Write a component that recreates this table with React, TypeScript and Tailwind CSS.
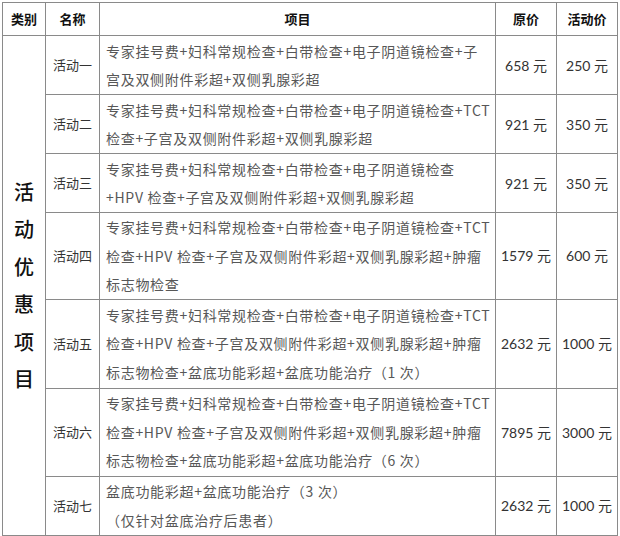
const rows = [
  {
    name: "活动一",
    h: "h-[59px]",
    lines: ["专家挂号费+妇科常规检查+白带检查+电子阴道镜检查+子", "宫及双侧附件彩超+双侧乳腺彩超"],
    price: "658",
    sale: "250",
  },
  {
    name: "活动二",
    h: "h-[59px]",
    lines: ["专家挂号费+妇科常规检查+白带检查+电子阴道镜检查+TCT", "检查+子宫及双侧附件彩超+双侧乳腺彩超"],
    price: "921",
    sale: "350",
  },
  {
    name: "活动三",
    h: "h-[59px]",
    lines: ["专家挂号费+妇科常规检查+白带检查+电子阴道镜检查", "+HPV 检查+子宫及双侧附件彩超+双侧乳腺彩超"],
    price: "921",
    sale: "350",
  },
  {
    name: "活动四",
    h: "h-[86px]",
    lines: [
      "专家挂号费+妇科常规检查+白带检查+电子阴道镜检查+TCT",
      "检查+HPV 检查+子宫及双侧附件彩超+双侧乳腺彩超+肿瘤",
      "标志物检查",
    ],
    price: "1579",
    sale: "600",
  },
  {
    name: "活动五",
    h: "h-[89px]",
    lines: [
      "专家挂号费+妇科常规检查+白带检查+电子阴道镜检查+TCT",
      "检查+HPV 检查+子宫及双侧附件彩超+双侧乳腺彩超+肿瘤",
      "标志物检查+盆底功能彩超+盆底功能治疗（1 次）",
    ],
    price: "2632",
    sale: "1000",
  },
  {
    name: "活动六",
    h: "h-[88px]",
    lines: [
      "专家挂号费+妇科常规检查+白带检查+电子阴道镜检查+TCT",
      "检查+HPV 检查+子宫及双侧附件彩超+双侧乳腺彩超+肿瘤",
      "标志物检查+盆底功能彩超+盆底功能治疗（6 次）",
    ],
    price: "7895",
    sale: "3000",
  },
  {
    name: "活动七",
    h: "h-[59px]",
    lines: ["盆底功能彩超+盆底功能治疗（3 次）", "（仅针对盆底治疗后患者）"],
    price: "2632",
    sale: "1000",
  },
];

const cell = "border border-[#8a8a8a]";
const label = ["活", "动", "优", "惠", "项", "目"];

export default function App() {
  return (
    <div
      lang="zh-CN"
      className="w-[620px] h-[536px] bg-white pt-[2px] pl-[2px] font-['Noto_Sans_CJK_SC','Lato',sans-serif]"
    >
      <table className="w-[615px] table-fixed border-collapse border border-[#7a7a7a]">
        <colgroup>
          <col className="w-[43px]" />
          <col className="w-[54px]" />
          <col className="w-[396px]" />
          <col className="w-[61px]" />
          <col className="w-[61px]" />
        </colgroup>
        <thead>
          <tr className="h-[33px] text-[13px] font-bold text-[#111]">
            <th className={cell}>类别</th>
            <th className={cell}>名称</th>
            <th className={cell}>项目</th>
            <th className={cell}>原价</th>
            <th className={cell}>活动价</th>
          </tr>
        </thead>
        <tbody>
          {rows.map((r, i) => (
            <tr key={r.name} className={r.h}>
              {i === 0 && (
                <td rowSpan={rows.length} className={`${cell} text-center align-middle`}>
                  <div className="flex flex-col items-center text-[20px] font-medium leading-[37.5px] text-[#111]">
                    {label.map((c) => (
                      <span key={c}>{c}</span>
                    ))}
                  </div>
                </td>
              )}
              <td className={`${cell} text-center text-[13px] text-[#333]`}>{r.name}</td>
              <td className={`${cell} px-[6px] text-[14px] leading-[28.5px] tracking-[0.7px] text-[#575757]`}>
                {r.lines.map((l) => (
                  <div key={l} className="whitespace-nowrap">
                    {l}
                  </div>
                ))}
              </td>
              <td className={`${cell} text-center text-[14px] text-[#333] font-['Lato','Noto_Sans_CJK_SC',sans-serif]`}>
                {r.price} 元
              </td>
              <td className={`${cell} text-center text-[14px] text-[#333] font-['Lato','Noto_Sans_CJK_SC',sans-serif]`}>
                {r.sale} 元
              </td>
            </tr>
          ))}
        </tbody>
      </table>
    </div>
  );
}
